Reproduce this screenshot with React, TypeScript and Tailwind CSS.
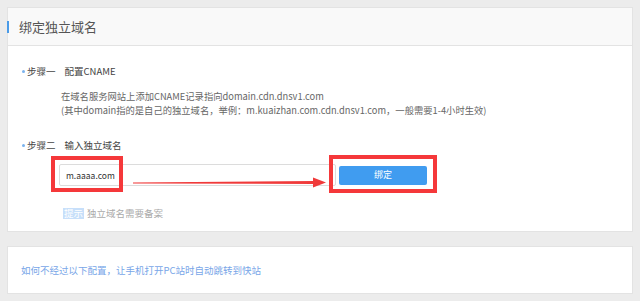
import React from "react";

const font = { fontFamily: '"Noto Sans CJK SC", "Noto Sans", sans-serif' };

function Arrow() {
  return (
    <svg width="194" height="12" viewBox="0 0 194 12" className="absolute left-[74px] top-[13px]">
      <polygon points="0,5.5 182,4 182,7 0,6.5" fill="#f03a3a" />
      <polygon points="180,0.5 193,5.5 180,10.5" fill="#f03a3a" />
    </svg>
  );
}

function StepLabel({ step, title }: { step: string; title: string }) {
  return (
    <div className="flex items-center h-[12px] text-[9.5px] text-[#444]">
      <span className="w-[3px] h-[3px] rounded-full bg-[#7ab3ee] mr-[2px]" />
      <span>{step}</span>
      <span className="ml-[9px]">{title}</span>
    </div>
  );
}

export default function App() {
  return (
    <div style={font} className="w-[640px] h-[301px] bg-[#ececec] overflow-hidden pt-[7px] px-[7px]">
      <div className="bg-white border border-[#e3e3e3] h-[225px]">
        <div className="h-[38px] bg-[#f9f9f9] border-b border-[#e3e3e3] flex items-center">
          <span className="w-[2px] h-[12px] bg-[#4a9be8] -ml-px" />
          <span className="ml-[10px] text-[13px] text-[#555]">绑定独立域名</span>
        </div>

        <div className="pl-[14px] pt-[19px]">
          <StepLabel step="步骤一" title="配置CNAME" />
          <div className="mt-[12px] ml-[39px] text-[9.3px] leading-[14px] text-[#666]">
            <p>在域名服务网站上添加CNAME记录指向domain.cdn.dnsv1.com</p>
            <p>(其中domain指的是自己的独立域名，举例：m.kuaizhan.com.cdn.dnsv1.com，一般需要1-4小时生效)</p>
          </div>

          <div className="mt-[22px]">
            <StepLabel step="步骤二" title="输入独立域名" />
          </div>

          <div className="relative mt-[13px] ml-[37px] h-[22px] flex items-center">
            <div className="w-[277px] h-[22px] border border-[#dcdcdc] rounded-[2px] flex items-center pl-[6px] text-[8.5px] text-[#333]">
              m.aaaa.com
            </div>
            <button className="ml-[3px] w-[88px] h-[19px] bg-[#409cf0] rounded-[2px] text-white text-[9px]">
              绑定
            </button>
            <div className="absolute -left-[8px] -top-[8px] w-[72px] h-[36px] border-[4px] border-[#f5383a]" />
            <div className="absolute left-[270px] -top-[9px] w-[108px] h-[38px] border-[4px] border-[#f5383a]" />
            <Arrow />
          </div>

          <div className="mt-[20px] ml-[41px] flex items-center text-[9.5px]">
            <span className="bg-[#c7dffa] text-white px-[1px] leading-[11px]">提示</span>
            <span className="ml-[3px] text-[#aaa]">独立域名需要备案</span>
          </div>
        </div>
      </div>

      <div className="mt-[14px] bg-white border border-[#e3e3e3] h-[48px] flex items-center pl-[13px]">
        <a className="text-[9.5px] text-[#78a6e8]">如何不经过以下配置，让手机打开PC站时自动跳转到快站</a>
      </div>
    </div>
  );
}
